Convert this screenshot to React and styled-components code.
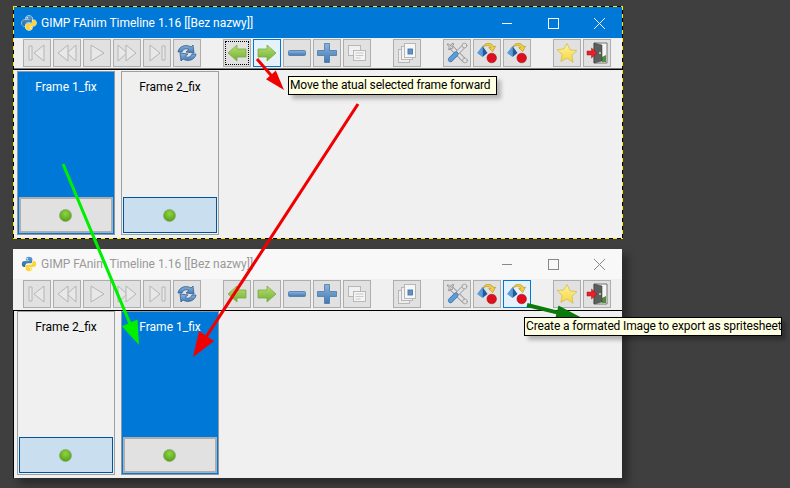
import React from "react";
import styled, { createGlobalStyle } from "styled-components";

const Global = createGlobalStyle`
  html, body { margin: 0; padding: 0; background: #3f3f3f; }
  * { box-sizing: border-box; }
`;

const FONT = `Roboto, "Open Sans", "Liberation Sans", sans-serif`;
const dashH = "repeating-linear-gradient(90deg,#ffe800 0 4px,#000 4px 8px)";
const dashV = "repeating-linear-gradient(180deg,#ffe800 0 4px,#000 4px 8px)";

const Desktop = styled.div`
  position: relative;
  width: 790px;
  height: 488px;
  overflow: hidden;
  background: #3f3f3f;
  font-family: ${FONT};
`;

const Defs = styled.svg`
  position: absolute;
  width: 0;
  height: 0;
`;

const Win = styled.div`
  position: absolute;
  left: ${(p) => p.$x}px;
  top: ${(p) => p.$y}px;
  width: ${(p) => p.$w}px;
  height: ${(p) => p.$h}px;
  display: flex;
  flex-direction: column;
  padding: ${(p) => (p.$active ? "1px" : "0")};
  background: ${(p) =>
    p.$active
      ? `${dashH} top/100% 1px no-repeat, ${dashH} bottom/100% 1px no-repeat, ${dashV} left/1px 100% no-repeat, ${dashV} right/1px 100% no-repeat, #000`
      : "#f0f0f0"};
  box-shadow: ${(p) => (p.$active ? "none" : "6px 6px 8px rgba(0,0,0,.35)")};
`;

const TitleBar = styled.div`
  height: ${(p) => (p.$active ? 31 : 30)}px;
  flex: none;
  display: flex;
  align-items: center;
  padding-left: ${(p) => (p.$active ? 7 : 8)}px;
  background: ${(p) => (p.$active ? "#0078d7" : "#f8f8f8")};
  color: ${(p) => (p.$active ? "#fff" : "#999")};
  font-size: 12px;
  letter-spacing: -0.03px;
`;

const Logo = styled.svg`
  width: 16px;
  height: 16px;
  margin-right: 4px;
  flex: none;
  overflow: visible;
`;

const TitleText = styled.span`
  flex: 1;
  white-space: nowrap;
`;

const Controls = styled.div`
  display: flex;
  align-items: center;
`;

const Ctl = styled.svg`
  width: 46px;
  height: 30px;
  display: block;
  stroke: ${(p) => (p.$active ? "#fff" : "#888")};
  fill: none;
`;

const Toolbar = styled.div`
  height: ${(p) => (p.$active ? 31 : 32)}px;
  flex: none;
  display: flex;
  align-items: flex-start;
  gap: 22px;
  padding: 1px 0 0 ${(p) => (p.$active ? 9 : 10)}px;
  background: #f0f0f0;
  border-bottom: ${(p) => (p.$active ? "1px solid #7a7a7a" : "1px solid #000")};
`;

const Group = styled.div`
  display: flex;
  gap: 2px;
`;

const ToolBtn = styled.div`
  position: relative;
  width: 28px;
  height: 28px;
  display: flex;
  align-items: center;
  justify-content: center;
  background: ${(p) => (p.$hover ? "#e5f1fb" : "#e1e1e1")};
  border: 1px solid ${(p) => (p.$hover ? "#0078d7" : "#adadad")};
  &::after {
    content: "";
    display: ${(p) => (p.$focus ? "block" : "none")};
    position: absolute;
    inset: 1px;
    border: 1px dotted #000;
  }
`;

const Icon = styled.svg`
  width: 24px;
  height: 24px;
  display: block;
  filter: blur(0.35px);
`;

const Content = styled.div`
  flex: 1;
  display: flex;
  align-items: flex-start;
  gap: 6px;
  padding: ${(p) => (p.$active ? "1px" : "0")} 0 0 3px;
  background: #f0f0f0;
  border-top: ${(p) => (p.$active ? "1px solid #000" : "none")};
  border-left: ${(p) => (p.$active ? "none" : "1px solid #000")};
`;

const Frame = styled.div`
  width: 98px;
  height: 164px;
  display: flex;
  flex-direction: column;
  padding: 1px;
  border: 1px solid ${(p) => (p.$selected ? "#8d9aa5" : "#a0a0a0")};
  background: ${(p) => (p.$selected ? "#0078d7" : "#f0f0f0")};
`;

const Label = styled.div`
  padding-top: 6px;
  height: 24px;
  line-height: 16px;
  text-align: center;
  font-size: 12px;
  white-space: nowrap;
  color: ${(p) => (p.$selected ? "#fff" : "#000")};
`;

const Widget = styled.div`
  margin-top: auto;
  height: 36px;
  display: flex;
  align-items: center;
  justify-content: center;
  background: ${(p) => (p.$selected ? "#e1e1e1" : "#c9dff0")};
  border: ${(p) => (p.$selected ? "2px solid #adadad" : "1px solid #005499")};
`;

const Led = styled.svg`
  width: 13px;
  height: 13px;
  margin-right: 1px;
  display: block;
`;

const Tip = styled.div`
  position: absolute;
  left: ${(p) => p.$x}px;
  top: ${(p) => p.$y}px;
  width: ${(p) => p.$w}px;
  height: 19px;
  line-height: 17px;
  padding-left: 1px;
  font-size: 12px;
  letter-spacing: -0.14px;
  white-space: nowrap;
  color: #000;
  background: #ffffe1;
  border: 1px solid #000;
  box-shadow: 4px 4px 4px rgba(0,0,0,.25);
`;

const Overlay = styled.svg`
  position: absolute;
  left: 0;
  top: 0;
  width: 790px;
  height: 488px;
  pointer-events: none;
`;

function arrowPoints(x1, y1, x2, y2, w, hl, hw) {
  const dx = x2 - x1, dy = y2 - y1;
  const len = Math.hypot(dx, dy);
  const ux = dx / len, uy = dy / len, nx = -uy, ny = ux;
  const bx = x2 - ux * hl, by = y2 - uy * hl;
  const p = [
    [x1 + nx * w / 2, y1 + ny * w / 2],
    [bx + nx * w / 2, by + ny * w / 2],
    [bx + nx * hw / 2, by + ny * hw / 2],
    [x2, y2],
    [bx - nx * hw / 2, by - ny * hw / 2],
    [bx - nx * w / 2, by - ny * w / 2],
    [x1 - nx * w / 2, y1 - ny * w / 2],
  ];
  return p.map((a) => a.map((v) => v.toFixed(1)).join(",")).join(" ");
}

const Arrow = ({ a, color }) => <polygon points={arrowPoints(...a)} fill={color} />;

const D = "#b4b4b4";
const DF = "#e8e8e8";

const icons = {
  first: <g stroke={D} fill={DF} strokeLinejoin="round"><rect x="4" y="5" width="3" height="14" /><path d="M19 4 9 12l10 8z" /></g>,
  prev: <g stroke={D} fill={DF} strokeLinejoin="round"><path d="M21 4 12 12l9 8z" /><path d="M13 4 3 12l10 8z" /></g>,
  play: <g stroke={D} fill={DF} strokeLinejoin="round"><path d="M6 4l13 8-13 8z" /></g>,
  next: <g stroke={D} fill={DF} strokeLinejoin="round"><path d="M3 4l9 8-9 8z" /><path d="M11 4l10 8-10 8z" /></g>,
  last: <g stroke={D} fill={DF} strokeLinejoin="round"><path d="M5 4l10 8-10 8z" /><rect x="17" y="5" width="3" height="14" /></g>,
  refresh: (
    <g fill="none" strokeLinejoin="round">
      <path d="M3 11C4 5 11 3 16 6l2-2 1 8-8-1 3-2.5C11 7 8 8 7 11z" fill="url(#blue)" stroke="#2f5f93" strokeWidth=".8" />
      <path d="M21 13c-1 6-8 8-13 5l-2 2-1-8 8 1-3 2.5c3 1.5 6 .5 7-2.5z" fill="url(#blue)" stroke="#2f5f93" strokeWidth=".8" />
    </g>
  ),
  left: <path d="M3 12l9-8v4h9v8h-9v4z" fill="url(#green)" stroke="#7fa842" strokeWidth=".8" strokeLinejoin="round" />,
  right: <path d="M21 12l-9-8v4H3v8h9v4z" fill="url(#green)" stroke="#7fa842" strokeWidth=".8" strokeLinejoin="round" />,
  minus: <rect x="3.500" y="9.500" width="17" height="5" rx="1" fill="url(#blue)" stroke="#4a78a8" strokeWidth=".8" />,
  plus: <path d="M9.500 2.500h5v7h7v5h-7v7h-5v-7h-7v-5h7z" fill="url(#blue)" stroke="#4a78a8" strokeWidth=".8" strokeLinejoin="round" />,
  copy: (
    <g stroke="#b2b2b2" strokeWidth=".9">
      <rect x="3.500" y="4.500" width="12" height="10" fill="#f0f0f0" />
      <rect x="8.500" y="9.500" width="12" height="10" fill="#f5f5f5" />
      <path d="M10.500 12h8M10.500 14.500h8M10.500 17h5" stroke="#c4c4c4" />
    </g>
  ),
  paste: (
    <g stroke="#b2b2b2" strokeWidth=".9">
      <rect x="3.500" y="8.500" width="11" height="13" fill="#eee" />
      <rect x="6.500" y="5.500" width="11" height="13" fill="#f2f2f2" />
      <rect x="9.500" y="2.500" width="11" height="14" fill="#f6f6f6" />
      <rect x="13" y="8" width="4.500" height="5" fill="#5f93c6" stroke="#4a78a8" />
    </g>
  ),
  tools: (
    <g fill="none" strokeLinecap="round">
      <path d="M6 6 18.500 18.500" stroke="#989898" strokeWidth="4.600" />
      <path d="M6 6 18.500 18.500" stroke="#e2e2e2" strokeWidth="3" />
      <path d="M3 3.500 7 7M8 3 4 8" stroke="#989898" strokeWidth="2.200" />
      <path d="M3.500 4 7 7M7.500 3.500 4 7.500" stroke="#e2e2e2" strokeWidth="1" />
      <path d="M19 5 13 11" stroke="#989898" strokeWidth="4.200" />
      <path d="M19 5 13 11" stroke="#e2e2e2" strokeWidth="2.800" />
      <path d="M11 13 5.500 18.500" stroke="#3a78b0" strokeWidth="5.200" />
      <path d="M11 13 5.500 18.500" stroke="#5c9cd8" strokeWidth="3.800" />
      <circle cx="20" cy="19.500" r="2.400" fill="#e2e2e2" stroke="#989898" strokeWidth=".8" />
      <circle cx="19.500" cy="4.500" r="2.400" fill="#e2e2e2" stroke="#989898" strokeWidth=".8" />
    </g>
  ),
  exportOne: (
    <g strokeLinejoin="round">
      <path d="M8 6C9 2 16 .5 18.500 5.500l2-.3-2.800 5.300-4-3.800 2-.3C15 4 11 4 8 6z" fill="#f3cf3a" stroke="#a98a20" strokeWidth=".6" />
      <path d="M7.500 5 2 12l5.500 4z" fill="#5a9bdd" />
      <path d="M7.500 5v11l5-4z" fill="#1d5a9e" />
      <circle cx="16.700" cy="17" r="4.800" fill="#dd0f1c" stroke="#a30f14" strokeWidth=".5" />
    </g>
  ),
  star: <path d="M12 2.500l3 6.300 6.800.9-5 4.800 1.300 6.900L12 17.100l-6.100 3.300 1.300-6.900-5-4.800 6.800-.9z" fill="url(#gold)" stroke="#d4bc4a" strokeWidth=".8" strokeLinejoin="round" />,
  exit: (
    <g strokeLinejoin="round">
      <rect x="9" y="2" width="13" height="20" fill="#f6f6f6" stroke="#555" strokeWidth=".8" />
      <path d="M17 16l4-2v7h-4z" fill="#4f8f3a" />
      <path d="M9 2l8 2v16l-8 2z" fill="#5a605a" stroke="#333" strokeWidth=".5" />
      <circle cx="15" cy="12" r=".9" fill="#ddd" />
      <path d="M12 12 6.500 7v3H2v4h4.500v3z" fill="#e8202a" stroke="#9c1418" strokeWidth=".5" />
    </g>
  ),
};

const groups = [
  ["first", "prev", "play", "next", "last", "refresh"],
  ["left", "right", "minus", "plus", "copy"],
  ["paste"],
  ["tools", "exportOne", "exportOne"],
  ["star", "exit"],
];

const PythonLogo = () => (
  <Logo viewBox="0 0 16 16">
    <g stroke="#fff" strokeWidth=".9" paintOrder="stroke">
      <path d="M8 .8C5.200.8 4.800 2 4.800 3v1.500h3.400V5H3C1.700 5 .8 6.200.8 8s.9 3 2.200 3h1.500V9.300c0-1.200 1-2 2.200-2h2.900c1 0 1.800-.8 1.800-1.800V3C11.200 1.700 10 .8 8 .8z" fill="url(#py)" />
      <path d="M8 15.200c2.800 0 3.200-1.200 3.200-2.200v-1.500H7.800V11H13c1.300 0 2.200-1.200 2.200-3s-.9-3-2.200-3h-1.500v1.700c0 1.200-1 2-2.200 2H6.400c-1 0-1.800.8-1.800 1.800V13c.2 1.300 1.400 2.200 3.400 2.200z" fill="#ffd43b" />
    </g>
    <circle cx="6.200" cy="2.800" r=".8" fill="#fff" />
    <circle cx="9.800" cy="13.200" r=".8" fill="#fff" />
  </Logo>
);

const Window = ({ active, x, y, w, h, hoverIdx, focusIdx, frames }) => {
  let idx = -1;
  return (
    <Win $active={active} $x={x} $y={y} $w={w} $h={h}>
      <TitleBar $active={active}>
        <PythonLogo />
        <TitleText>GIMP FAnim Timeline 1.16 [[Bez nazwy]]</TitleText>
        <Controls>
          <Ctl $active={active} viewBox="0 0 46 30"><path d="M18 15.500h10" /></Ctl>
          <Ctl $active={active} viewBox="0 0 46 30"><rect x="18.500" y="10.500" width="10" height="10" /></Ctl>
          <Ctl $active={active} viewBox="0 0 46 30"><path d="M18 10l11 11M29 10 18 21" /></Ctl>
        </Controls>
      </TitleBar>
      <Toolbar $active={active}>
        {groups.map((g, gi) => (
          <Group key={gi}>
            {g.map((name) => {
              idx += 1;
              return (
                <ToolBtn key={idx} $hover={idx === hoverIdx} $focus={idx === focusIdx}>
                  <Icon viewBox="0 0 24 24">{icons[name]}</Icon>
                </ToolBtn>
              );
            })}
          </Group>
        ))}
      </Toolbar>
      <Content $active={active}>
        {frames.map((f) => (
          <Frame key={f.name} $selected={f.selected}>
            <Label $selected={f.selected}>{f.name}</Label>
            <Widget $selected={f.selected}>
              <Led viewBox="0 0 13 13">
                <circle cx="6.500" cy="6.500" r="6" fill="url(#led)" stroke="#8fa87a" strokeWidth=".8" />
              </Led>
            </Widget>
          </Frame>
        ))}
      </Content>
    </Win>
  );
};

export default function App() {
  return (
    <Desktop>
      <Global />
      <Defs>
        <defs>
          <linearGradient id="blue" x1="0" y1="0" x2="0" y2="1">
            <stop offset="0" stopColor="#8fb4dc" />
            <stop offset="1" stopColor="#3f78b5" />
          </linearGradient>
          <linearGradient id="green" x1="0" y1="0" x2="0" y2="1">
            <stop offset="0" stopColor="#b8e070" />
            <stop offset="1" stopColor="#6fb034" />
          </linearGradient>
          <linearGradient id="gold" x1="0" y1="0" x2="0" y2="1">
            <stop offset="0" stopColor="#fff3a0" />
            <stop offset="1" stopColor="#f5d53c" />
          </linearGradient>
          <linearGradient id="py" x1="0" y1="0" x2="0" y2="1">
            <stop offset="0" stopColor="#5a9fd4" />
            <stop offset="1" stopColor="#306998" />
          </linearGradient>
          <radialGradient id="led" cx=".5" cy=".35" r=".7">
            <stop offset="0" stopColor="#8fd640" />
            <stop offset="1" stopColor="#4f9a10" />
          </radialGradient>
        </defs>
      </Defs>
      <Window
        active
        x={13}
        y={6}
        w={610}
        h={233}
        hoverIdx={7}
        focusIdx={6}
        frames={[
          { name: "Frame 1_fix", selected: true },
          { name: "Frame 2_fix", selected: false },
        ]}
      />
      <Window
        x={13}
        y={249}
        w={609}
        h={229}
        hoverIdx={14}
        focusIdx={-1}
        frames={[
          { name: "Frame 2_fix", selected: false },
          { name: "Frame 1_fix", selected: true },
        ]}
      />
      <Overlay viewBox="0 0 790 488">
        <Arrow a={[527, 305, 584, 319, 4, 28, 14]} color="#0a7a0a" />
      </Overlay>
      <Tip $x={288} $y={76} $w={209}>Move the atual selected frame forward</Tip>
      <Tip $x={524} $y={317} $w={258}>Create a formated Image to export as spritesheet</Tip>
      <Overlay viewBox="0 0 790 488">
        <Arrow a={[63, 164, 139, 345, 3, 24, 17]} color="#00ee00" />
        <Arrow a={[358, 104, 193, 357, 3, 25, 18]} color="#f00000" />
        <Arrow a={[257, 59, 284, 90, 3, 20, 13]} color="#f00000" />
      </Overlay>
    </Desktop>
  );
}
